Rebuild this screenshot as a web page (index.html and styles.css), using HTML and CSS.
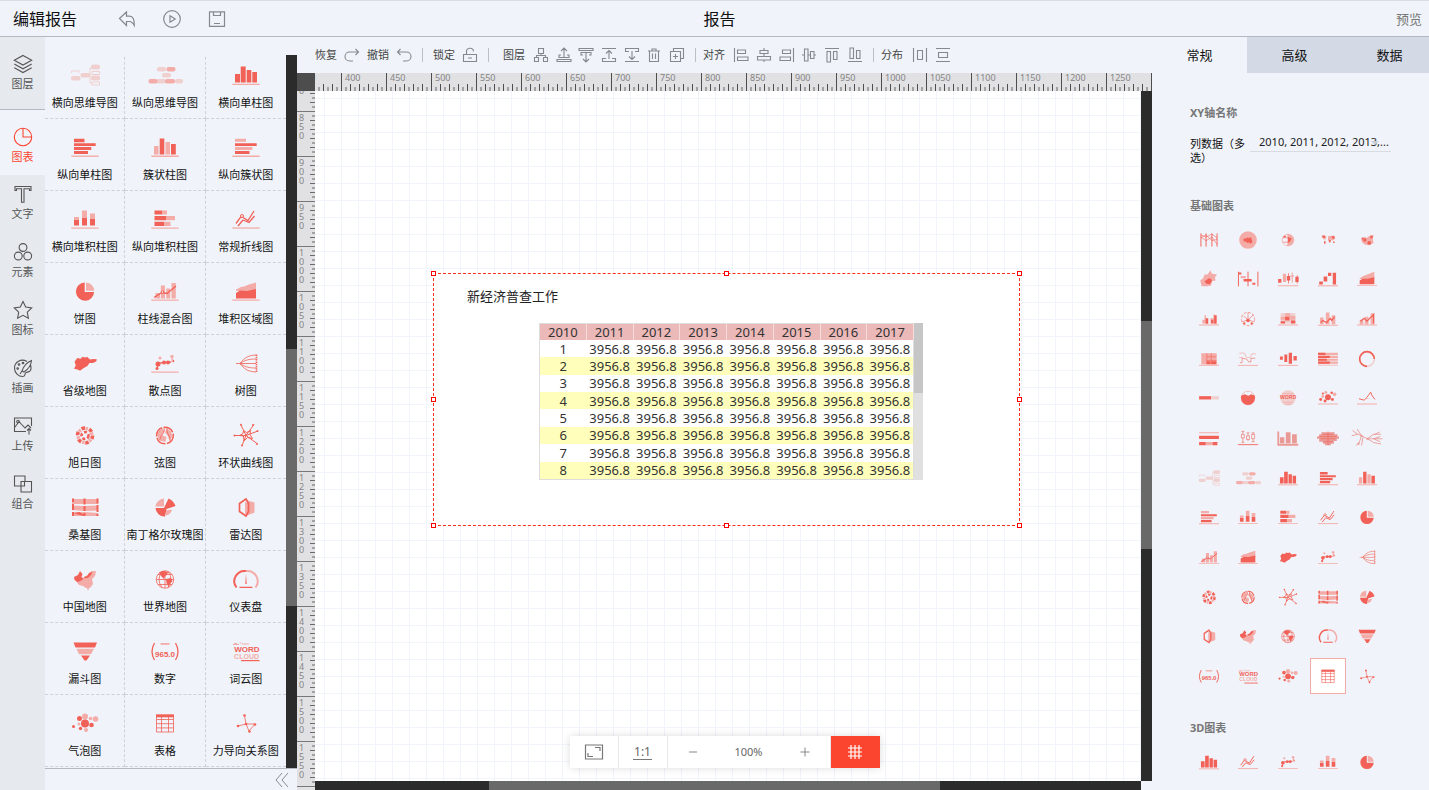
FILE: index.html
```html
<!DOCTYPE html>
<html lang="zh-CN">
<head>
<meta charset="utf-8">
<title>编辑报告</title>
<link rel="stylesheet" href="styles.css">
</head>
<body>
<svg class="sprite" aria-hidden="true">
  <symbol id="mind-h" viewBox="0 0 30 24"><g class="q"><rect x="21" y="1.500" width="9" height="5" rx="2"/><rect x="1" y="13" width="9.500" height="4.500" rx="2"/><rect x="10.500" y="10" width="10" height="4.500" rx="2"/><rect x="21" y="12.500" width="9" height="5" rx="2"/></g><path class="lq" d="M20.500 12H20V5h2M20 12v8h2M22 8.500h7.500v3H22zM22 19h7.500v3H22zM1.500 10V8H9v2"/></symbol>
  <symbol id="mind-v" viewBox="0 0 36 24"><g class="q"><rect x="10" y="4" width="9" height="4.500" rx="2"/><rect x="15" y="10" width="9" height="4.500" rx="2"/><rect x="9" y="16" width="10" height="4.500" rx="2"/><rect x="28" y="16" width="8" height="4.500" rx="2"/></g><g class="p"><rect x="19.500" y="4" width="9" height="4.500" rx="2"/><rect x="1.500" y="16" width="9" height="4.500" rx="2"/><rect x="18" y="16" width="10" height="4.500" rx="2"/></g></symbol>
  <symbol id="bar" viewBox="0 0 30 24"><path class="r" d="M4 11h5v8.500H4zM9.700 3.500h5v16h-5zM15.700 7h4.600v12.500h-4.600zM21.300 9H26v10.500h-4.700z"/><path class="p" d="M1.300 20.700h27.400V22H1.300z"/></symbol>
  <symbol id="hbar" viewBox="0 0 30 24"><path class="r" d="M4 3.800h10.500v3.400H4zM4 8.200h21.700v2.900H4zM4 12.100h17.300V15H4zM4 16h14v3H4z"/><path class="p" d="M1.300 20.500h27.400v1.400H1.300z"/></symbol>
  <symbol id="cluster" viewBox="0 0 30 24"><path class="r" d="M9.700 3.500h4.600v16H9.700zM21 9h4.800v10.500H21z"/><path class="p" d="M4 11h4.500v8.500H4zM15.500 7H20v12.500h-4.500zM1.300 20.500h27.400v1.400H1.300z"/></symbol>
  <symbol id="hcluster" viewBox="0 0 30 24"><path class="r" d="M4 8.200h21.700v2.900H4zM4 16h14.500v3H4z"/><path class="p" d="M4 3.800h11v3H4zM4 12.100h17.300V15H4zM1.300 20.500h27.400v1.400H1.300z"/></symbol>
  <symbol id="stack" viewBox="0 0 30 24"><path class="r" d="M4 13h5v5.600H4zM12 10.500h5v8.100h-5zM20 11.500h5v7.100h-5z"/><path class="p" d="M4 10h5v3H4zM12 3.500h5v7h-5zM20 6.500h5v5h-5zM1.300 20.400h27.400v1.300H1.300z"/></symbol>
  <symbol id="hstack" viewBox="0 0 30 24"><path class="r" d="M4.500 3.500h8v4h-8zM4.500 9h11.500v4.300H4.500zM4.500 14.800H14V19H4.500z"/><path class="p" d="M12.500 3.500H17v4h-4.500zM16 9h9v4.300h-9zM14 14.800h6.500V19H14zM1.300 20.400h27.400v1.300H1.300z"/></symbol>
  <symbol id="line" viewBox="0 0 30 24"><path class="lr" d="M5 16.500l5-7 2 1 5 3 6-9.500M7 19l5-6M12 13l6 2.500 5.500-6.500"/><circle class="ring" cx="11" cy="9" r="1.500"/><path class="p" d="M1.300 20.400h27.400v1.300H1.300z"/></symbol>
  <symbol id="pie" viewBox="0 0 30 24"><path class="r" d="M14.700 3.500v9.400h9.400a9.100 9.100 0 1 1-9.400-9.400z"/><path class="p" d="M16 3.500a8.500 8.500 0 0 1 8.200 8.200H16z"/></symbol>
  <symbol id="mix" viewBox="0 0 30 24"><path class="p" d="M5.500 14H10v5.500H5.500zM10.800 6.500H15v13h-4.200zM16.200 9.500h4v10h-4zM21.500 4h4.300v15.500h-4.300zM1.300 20.400h27.400v1.300H1.300z"/><path class="lr" d="M4 18.500l8-5 5 1 9-7.500"/><circle class="ring" cx="12.500" cy="13" r="1.200"/></symbol>
  <symbol id="area" viewBox="0 0 30 24"><path class="p" d="M5 10.500l5-2.500 3-.5 5-2 7-2V12H5zM1.300 20.400h27.400v1.300H1.300z"/><path class="r" d="M5 14l4-2.500 7 .5 9-2v9.500H5z"/></symbol>
  <symbol id="province" viewBox="0 0 30 24"><path class="r" d="M12.700 5.700l2 .8 2.600-.5L20 8.600l3.500-.6 3.300.2-.6 2.400-3.400 1.300-3.400.2-2 3-4 2.200-3.400 2.500-2.500-1.400L4 17.700l1.800-3.400-1.300-3.600 2.800-3.600 3.200.7z"/></symbol>
  <symbol id="scatter" viewBox="0 0 30 24"><g class="r"><circle cx="8" cy="13" r="2.500"/><circle cx="7" cy="17.500" r="1.500"/><circle cx="14" cy="11.500" r="2"/><circle cx="18" cy="11.500" r="2"/><circle cx="23" cy="10" r="1.300"/></g><path class="lr" d="M7 17l2-5 12-1"/><g class="p"><circle cx="10" cy="7" r="1.500"/><circle cx="22" cy="5.500" r="1.700"/><path d="M21.500 5h1.500v6h-1.500zM1.300 20.400h27.400v1.300H1.300z"/></g></symbol>
  <symbol id="tree" viewBox="0 0 30 24"><path class="lt" d="M5 12.500h4c4-5 7-8 16-8.500M9 12.500c4 5 7 8 16 8.500M9 12.500c5-3.500 9-4.500 16-4.500M9 12.500c5 3.500 9 4.500 16 4.500M9 12.500h16"/><path class="dots" d="M25.500 3.500v18"/></symbol>
  <symbol id="sunburst" viewBox="0 0 30 24"><circle class="dash-r" cx="15" cy="12.500" r="7.500"/><circle class="dash-p" cx="15" cy="12.500" r="7"/><circle class="dash-i" cx="15" cy="12.500" r="3.500"/></symbol>
  <symbol id="chord" viewBox="0 0 30 24"><circle class="chord-r" cx="15" cy="12.500" r="8.300"/><path class="p" d="M8 8l5-3 1.500 4-3 3 5 2-1 5-6-1.500-2-4zM17 5.500l4 3 1.500 5-3 4-2-5-2.500-3z"/><path class="lt" d="M14 4.500c2 5-4 8-4 12M17 5c-1 6 4 8 3 13"/></symbol>
  <symbol id="web" viewBox="0 0 30 24"><path class="lr3" d="M10 2l5 10.500M23 1.500l-8 11M3 12.500l12 0M27 8l-12 4.500M26 20.500l-11-8M11 22.500l4-10M12.500 7.500l3 2 4-2-.5 4 2.500 4-5-1-3.500 3.500-.5-5-4-.5 3.500-2z"/><g class="r"><circle cx="10" cy="1.800" r="1"/><circle cx="22" cy="2" r="1"/><circle cx="3.500" cy="12.500" r="1"/><circle cx="26.500" cy="8" r="1"/><circle cx="26" cy="21" r="1"/><circle cx="11" cy="22.500" r="1"/></g></symbol>
  <symbol id="sankey" viewBox="0 0 30 24"><path class="p" d="M2 4h26v5H2zM2 10.500l12 .5 14-.5v5l-13 .5-13-1zM2 17h12l14 1v3H2z"/><path class="r" d="M2 3.500h2v3.500H2zM2 9h2v6H2zM2 17h2v4H2zM13.500 3.500h2v6h-2zM13.500 11h2v5h-2zM13.500 18h2v3h-2zM26.500 3.500h2v5h-2zM26.500 10h2v7h-2zM26.500 19h2v2h-2zM4 18.500l5-1.500 7 3.500-2 .5z"/></symbol>
  <symbol id="rose" viewBox="0 0 30 24"><path class="p" d="M14 11.500H5.500A9 9 0 0 1 14 3.500zM16 15.500l6-1A8 8 0 0 1 16 20.500z"/><path class="r" d="M5.500 13H14L18.500 3.500a13 13 0 0 1 7 7.500L16.500 14l-1.500 7.500A9 9 0 0 1 5.500 13z"/></symbol>
  <symbol id="radar" viewBox="0 0 30 24"><path class="p" d="M15 5l8.500 2.500v10L15 21l3-4.500v-8z"/><path class="p" d="M14 7l5 2v8l-5 2z"/><path class="lr2" d="M15 4L8.500 8.500v8L15 21l2.500-4.500v-8z"/></symbol>
  <symbol id="china" viewBox="0 0 30 24"><path class="p" d="M10 12l6-3 4-2 2-3 4 0-1 5-3 3 1 5-3 4-4 0-3-2-4-1-3-4z"/><path class="r" d="M4 10l4-2 2-4 2.500 3-1 3 2 2-3 2-3 1-3-2zM14 10l3-1 2-3 3-1.500-.5 3-3 3-3 1z"/><circle class="r" cx="18" cy="22" r=".7"/></symbol>
  <symbol id="world" viewBox="0 0 30 24"><circle class="lt" cx="15" cy="12.500" r="8.700"/><path class="lt" d="M6.500 12.500h17M15 4v17M8 7.500h14M8 17.500h14M12 4.500q-6 8 0 16M18 4.500q6 8 0 16"/><path class="r" d="M9 5.500l4-1.500 5 1-1 3-2 1-1 3-3-3zM16 12l5-1 1.500 3-3 3-1 3-2-4z"/></symbol>
  <symbol id="gauge" viewBox="0 0 30 24"><path class="g-r" d="M5.500 20.500A10.300 10.300 0 0 1 15 4"/><path class="g-p" d="M15 4a10.300 10.300 0 0 1 9.500 16.500"/><path class="r" d="M14.300 17l.7-10.500.7 10.500zM8.500 19.800h13v1.300h-13z"/></symbol>
  <symbol id="funnel" viewBox="0 0 30 24"><path class="r" d="M3.500 3.500H27l-2 5H5.500zM11 16.500h9l-3.500 5h-2z"/><path class="p" d="M6.500 9.700H24L21 15.300H9z"/></symbol>
  <symbol id="bubble" viewBox="0 0 30 24"><g class="p"><circle cx="15" cy="5.500" r="3"/><circle cx="25.500" cy="8" r="2.800"/><circle cx="20.500" cy="7.500" r="1.800"/><circle cx="9" cy="13" r="1.500"/><circle cx="16" cy="19" r="2"/></g><g class="r"><circle cx="9.500" cy="7.500" r="2.500"/><circle cx="15" cy="12.500" r="4"/><circle cx="21.500" cy="14" r="2.300"/><circle cx="3.500" cy="15.500" r="1.500"/><circle cx="10.500" cy="17.500" r="1.700"/></g></symbol>
  <symbol id="table" viewBox="0 0 30 24"><path class="lt" d="M6.500 4h17v17h-17zM6.500 8.500h17M6.500 12.700h17M6.500 16.900h17M11.500 6v15M18.500 6v15"/><path class="r" d="M6 3.500h18v2.800H6z"/></symbol>
  <symbol id="force" viewBox="0 0 30 24"><path class="lt" d="M13.500 4.500l1.500 8.500 3 7 6-7-9 0-8 2"/><g class="r"><circle cx="13.500" cy="4.500" r="1.300"/><circle cx="15" cy="13" r="1.300"/><circle cx="18.500" cy="20.500" r="1.300"/><circle cx="24" cy="13.500" r="1.300"/><circle cx="7" cy="15" r="1.300"/></g></symbol>

  <symbol id="parallel" viewBox="0 0 30 24"><path class="lr" d="M4 3v18M11 3v18M19 3v18M26 3v18"/><path class="lt" d="M4 5l7 3 8-4 7 5M4 9l7-4 8 8 7-2M4 8l7 5 8-5 7 10"/></symbol>
  <symbol id="contour" viewBox="0 0 30 24"><circle class="p" cx="15" cy="12" r="12"/><path class="r" d="M9 10l4 0 2-2 1 2 3-2 1 3 1 4-3 2-2-2-2 1-2-2-3 0z"/></symbol>
  <symbol id="globe" viewBox="0 0 30 24"><circle class="lp" cx="15" cy="12" r="8"/><path class="lt" d="M15 4v16M8 9h14M8 15h14"/><path class="p" d="M15 4a8 8 0 0 1 0 16z"/><path class="r" d="M15 8l5 2-2 4-3 2zM8 8l3-2 2 1-3 2z"/></symbol>
  <symbol id="worldmap" viewBox="0 0 30 24"><path class="p" d="M6 7l5-1 2 2-2 4-3-2zM15 7l8-1 2 4-4 3-3-2-3 1z"/><path class="r" d="M7 6h4v3H8zM10 13l2 1-1 4-1.500-2zM16 11l3 1-1 4-2-2zM20 7h4v3h-3zM22 14h2v2h-2z"/></symbol>
  <symbol id="mappoint" viewBox="0 0 30 24"><path class="p" d="M7 10l4-2 4 1 4-3 5-1-1 6 1 5-6 3-6-1-4-3z"/><g class="r"><circle cx="12" cy="12" r="2.300"/><circle cx="18" cy="16" r="2.500"/><circle cx="21" cy="8" r="1.800"/><circle cx="9" cy="10" r="1.300"/></g></symbol>
  <symbol id="district" viewBox="0 0 30 24"><path class="p" d="M3 14l4-3 2-5 4 0 4-6 2 5 7 1-3 4 1 4-5 1-1 6-5 1-8 0z"/><path class="r" d="M9 15l3-2 3-2 3 1 1 3-3 4-5-1z"/></symbol>
  <symbol id="gantt" viewBox="0 0 30 24"><path class="lr" d="M2 2v20M15 2v20M28.500 2v20"/><path class="p" d="M5 8h7v3H5z"/><path class="r" d="M2 3h4v3H2zM9 12h11v3.500H9zM21 17h4v3h-4z"/></symbol>
  <symbol id="candle" viewBox="0 0 30 24"><path class="p" d="M8 5h4.500v11H8zM1 20.500h28V22H1zM20 3h1.500v14H20zM18.500 7h4.500v2h-4.500z"/><path class="r" d="M1.500 12h4.500v5H1.500zM13.500 8H18v6h-4.500zM25 9h4.500v7H25zM15.300 4h1v14h-1zM27 7h1v11h-1z"/></symbol>
  <symbol id="waterfall" viewBox="0 0 30 24"><path class="r" d="M3 15.500h5v4H3zM9 8.500h5v7H9zM15 3.500h4.500V8H15zM21.500 3.500H26v16h-4.500z"/><path class="p" d="M1.300 20.500h27.400V22H1.300z"/></symbol>
  <symbol id="area2" viewBox="0 0 30 24"><path class="p" d="M5 11l5-3 8-3 7-3v10H5zM1.300 20.400h27.400v1.300H1.300z"/><path class="r" d="M5 14l4-2.500 7 0 9-2v9.500H5z"/></symbol>
  <symbol id="twin" viewBox="0 0 30 24"><path class="p" d="M6 13h4v5H6zM9 7h2v11H9zM17 11h4v7h-4zM21 6h2v12h-2zM1.300 19.500h27.400v1.300H1.300z"/><path class="r" d="M10.500 11H14v7.500h-3.500zM22 7h3.500v11.500H22zM18 13h3v5h-3z"/></symbol>
  <symbol id="radial" viewBox="0 0 30 24"><circle class="dash-t" cx="15" cy="12" r="9"/><path class="lt" d="M15 13L9 8M15 13V3M15 13l7-6M15 13l8 3M15 13l-8 3"/><g class="r"><circle cx="15" cy="14" r="2.500"/><circle cx="10" cy="18" r="1.500"/><circle cx="20" cy="18" r="1.500"/></g></symbol>
  <symbol id="heat" viewBox="0 0 30 24"><path class="q" d="M5 4h20v14H5z"/><path class="p" d="M11 4h7v5h-7zM5 9h6v4H5zM18 8h7v5h-7z"/><path class="r" d="M11 9h6v5h-6zM5 15h6v3H5zM19 14h6v4h-6z"/><path class="p" d="M1.300 19.500h27.400v1.300H1.300z"/></symbol>
  <symbol id="mix2" viewBox="0 0 30 24"><path class="p" d="M4 10h5v9H4zM12 3h5v16h-5zM20 7h5v12h-5zM1.300 20h27.400v1.300H1.300z"/><path class="lr2" d="M5 17l3-3 5 3 5-6 2 3 4-5"/></symbol>
  <symbol id="mix3" viewBox="0 0 30 24"><path class="p" d="M5 13h5v6H5zM12 9h5v10h-5zM20 4h5v15h-5zM1.300 19.500h27.400v1.300H1.300z"/><path class="lr2" d="M6 15l5-4 4 4 9-9v12"/></symbol>
  <symbol id="treemap" viewBox="0 0 30 24"><path class="p" d="M4.500 4h21v15h-21zM1.300 20h27.400v1.300H1.300z"/><path class="r" d="M12 15h5v4h-5zM18 15h7v4h-7z"/><path class="lt" d="M12 4v15M18 4v15M12 9h13M12 14h13"/></symbol>
  <symbol id="step" viewBox="0 0 30 24"><path class="lp" d="M3 4h7l3 6h5l2-5h6M3 10h5"/><path class="lt" d="M4 17h3v-6l6 1 3 4h3v-5h6"/><path class="p" d="M1.300 20h27.400v1.300H1.300z"/></symbol>
  <symbol id="center" viewBox="0 0 30 24"><path class="r" d="M4 8.500h4v4.500H4zM10 6h4v10h-4zM16 3.500h4.500v15H16zM22.500 8H27v6h-4.500z"/><path class="p" d="M1.300 20h27.400v1.300H1.300z"/></symbol>
  <symbol id="percent" viewBox="0 0 30 24"><path class="p" d="M1.500 3.500h27v3h-27zM1.500 7.500h27v3h-27zM1.500 11.500h27v3h-27zM1.500 15.500h27v3h-27zM1.500 20h27v1h-27z"/><path class="r" d="M1.500 3.500h10v3h-10zM1.500 7.500h16v3h-16zM1.500 11.500h12v3h-12zM1.500 15.500h16v3h-16z"/></symbol>
  <symbol id="donut" viewBox="0 0 30 24"><circle class="donut-q" cx="15" cy="12" r="10"/><path class="donut-r" d="M15 22A10 10 0 1 1 25 12"/></symbol>
  <symbol id="progress" viewBox="0 0 30 24"><path class="r" d="M1.500 9.500H18v4.500H1.500z"/><path class="q" d="M18 9.500h10.500V14H18z"/></symbol>
  <symbol id="liquid" viewBox="0 0 30 24"><circle class="lp" cx="15" cy="12" r="9.300"/><path class="r" d="M5.500 9l5-2 5 2 4-2 5 2v3a9.500 9.500 0 0 1-19 0z"/></symbol>
  <symbol id="bubble2" viewBox="0 0 30 24"><g class="p"><circle cx="12" cy="4.500" r="2"/><circle cx="24" cy="7" r="2.500"/><circle cx="8" cy="10" r="2"/><path d="M1.300 19.500h27.400v1.300H1.300z"/></g><g class="r"><circle cx="15" cy="11" r="4"/><circle cx="20" cy="5" r="1.700"/><circle cx="8" cy="6" r="1.500"/><circle cx="5" cy="14" r="2"/><circle cx="11" cy="16" r="2"/><circle cx="21" cy="14" r="2"/></g></symbol>
  <symbol id="peak" viewBox="0 0 30 24"><path class="lr" d="M4 13l7 2 4-4 5-7 2 5 4 5"/><path class="p" d="M1.300 19.500h27.400v1.300H1.300zM11 14l4-2 5 0z"/></symbol>
  <symbol id="bands" viewBox="0 0 30 24"><path class="p" d="M1.500 4h27v1.500h-27zM10.500 17.500H20V22h-9.500z"/><path class="r" d="M1.500 9h27v4.500h-27zM1.500 17.500h9V22h-9zM20 17.500h6.500V22H20z"/></symbol>
  <symbol id="boxplot" viewBox="0 0 30 24"><path class="lt" d="M6 3h4M8 3v4M6 7h4v5H6zM8 12v6M6 18h4M13 5h4M15 5v4M13 9h4v5h-4zM15 14v2M20 5h4M22 5v2M20 7h4v6h-4zM22 13v4M20 17h4"/><path class="r" d="M1.300 20.500h27.400v1.200H1.300z"/></symbol>
  <symbol id="histo" viewBox="0 0 30 24"><path class="m" d="M.500 3H3v17h26v2.500H.500zM4 11h6v8H4zM12 4h6.500v15H12zM20.500 7H27v12h-6.500z"/></symbol>
  <symbol id="brain" viewBox="0 0 30 24"><path class="m" d="M6 4h18v3h4v3h2v3h-3v3h-4v4h-4v2h-8v-2H8v-3H3v-4H0v-3h3V7h3z"/><path class="lt" d="M15 3v19M3 10h24M5 13h20M8 7h14M9 17h12"/></symbol>
  <symbol id="branch" viewBox="0 0 44 24"><path class="lb" d="M2 2l7 5 5 2 8 4 8-6 10 0M22 13l20 0M22 13l8 5 10 2M14 9L8 0M9 7L1 9M14 9l-4 12M16 11l-2 11M30 8l8-4M30 13l9-3M30 13l9 4M10 18l-3 4"/><g class="m"><circle cx="14" cy="9" r="1.500"/><circle cx="22" cy="13" r="1.500"/><circle cx="10" cy="20" r="1.200"/></g></symbol>
</svg>

<div class="app">
  <header class="header">
    <div class="header-left">
      <h1 class="header-name">编辑报告</h1>
      <button class="head-btn" aria-label="返回"><svg viewBox="0 0 18 18"><path d="M1.500 8.500L8.500 2v4.200h3c3.500 0 5 3 4.800 9.300-1.500-2.800-3-4-5-4H8.500v4z"/></svg></button>
      <button class="head-btn" aria-label="播放"><svg viewBox="0 0 18 18"><circle cx="9" cy="9" r="8.300"/><path d="M7 5.800l5.200 3.200L7 12.200z"/></svg></button>
      <button class="head-btn" aria-label="保存"><svg viewBox="0 0 18 18"><path d="M1.500 1.800h15v14.500h-15zM5.500 2v3.500h7V2M6 13.500h6"/></svg></button>
    </div>
    <div class="header-title">报告</div>
    <a class="preview" href="#preview">预览</a>
  </header>

  <div class="body">
    <nav class="rail">
      <button class="rail-item rail-first"><svg viewBox="0 0 20 20"><path d="M10 1.500l8.700 4.800L10 11 1.300 6.300zM1.300 10l8.700 4.800L18.700 10M1.300 13.700l8.700 4.800 8.700-4.800"/></svg>图层</button>
      <button class="rail-item rail-active"><svg viewBox="0 0 20 20"><circle cx="10" cy="10" r="8.700"/><path d="M10 1.300V10h8.700"/></svg>图表</button>
      <button class="rail-item"><svg viewBox="0 0 20 20"><path d="M2 2.500h16v4h-1.500V4.700H11v13.500H8.500V4.700H3.500v1.800H2z"/></svg>文字</button>
      <button class="rail-item"><svg viewBox="0 0 20 20"><circle cx="10" cy="5.500" r="3.900"/><circle cx="5.300" cy="14" r="3.900"/><circle cx="14.700" cy="14" r="3.900"/></svg>元素</button>
      <button class="rail-item"><svg viewBox="0 0 20 20"><path d="M10 1.500l2.700 5.600 6 .8-4.400 4.200 1.100 6.100L10 15.300l-5.400 2.900 1.100-6.100L1.300 7.900l6-.8z"/></svg>图标</button>
      <button class="rail-item"><svg viewBox="0 0 20 20"><path d="M14 3.500C8 0 1.500 4 1.500 10c0 5 4 8.500 8 8.500 3 0 2-2 3-3.500s5 0 5.500-4c.2-1.500 0-2.500-.5-4M18.500 2.500c-5 2-8 6-9.500 10.500l2 1c4-2.500 7-6.500 7.500-11.500zM9 13l-2 3"/><circle cx="6" cy="6.500" r=".8"/><circle cx="4.700" cy="10.500" r=".8"/><circle cx="10" cy="5" r=".8"/></svg>插画</button>
      <button class="rail-item"><svg viewBox="0 0 20 20"><path d="M13 15.500H1.500V2h17v8M2 11l4-5.500 6 6.500 3-3 3 3M16 18.500v-6M14 14.500l2-2 2 2"/><circle cx="5" cy="5.500" r="1.300"/></svg>上传</button>
      <button class="rail-item"><svg viewBox="0 0 20 20"><path d="M7.500 12H1.500V2H12v5M8 7.500h10.500V18H8zM7.500 12h4V7.500"/></svg>组合</button>
    </nav>

    <aside class="library">
      <div class="library-scroll">
        <div class="library-grid">
          <button class="chart"><svg><use href="#mind-h"/></svg>横向思维导图</button>
          <button class="chart"><svg class="wide"><use href="#mind-v"/></svg>纵向思维导图</button>
          <button class="chart"><svg><use href="#bar"/></svg>横向单柱图</button>
          <button class="chart"><svg><use href="#hbar"/></svg>纵向单柱图</button>
          <button class="chart"><svg><use href="#cluster"/></svg>簇状柱图</button>
          <button class="chart"><svg><use href="#hcluster"/></svg>纵向簇状图</button>
          <button class="chart"><svg><use href="#stack"/></svg>横向堆积柱图</button>
          <button class="chart"><svg><use href="#hstack"/></svg>纵向堆积柱图</button>
          <button class="chart"><svg><use href="#line"/></svg>常规折线图</button>
          <button class="chart"><svg><use href="#pie"/></svg>饼图</button>
          <button class="chart"><svg><use href="#mix"/></svg>柱线混合图</button>
          <button class="chart"><svg><use href="#area"/></svg>堆积区域图</button>
          <button class="chart"><svg><use href="#province"/></svg>省级地图</button>
          <button class="chart"><svg><use href="#scatter"/></svg>散点图</button>
          <button class="chart"><svg><use href="#tree"/></svg>树图</button>
          <button class="chart"><svg><use href="#sunburst"/></svg>旭日图</button>
          <button class="chart"><svg><use href="#chord"/></svg>弦图</button>
          <button class="chart"><svg><use href="#web"/></svg>环状曲线图</button>
          <button class="chart"><svg><use href="#sankey"/></svg>桑基图</button>
          <button class="chart"><svg><use href="#rose"/></svg>南丁格尔玫瑰图</button>
          <button class="chart"><svg><use href="#radar"/></svg>雷达图</button>
          <button class="chart"><svg><use href="#china"/></svg>中国地图</button>
          <button class="chart"><svg><use href="#world"/></svg>世界地图</button>
          <button class="chart"><svg><use href="#gauge"/></svg>仪表盘</button>
          <button class="chart"><svg><use href="#funnel"/></svg>漏斗图</button>
          <button class="chart"><svg viewBox="0 0 30 24"><path class="lr" d="M4.500 4q-5 8.500 0 17M25.500 4q5 8.500 0 17"/><path class="p" d="M10.500 4h9v1.800h-9z"/><text class="t-num" x="15" y="17.500">965.0</text></svg>数字</button>
          <button class="chart"><svg viewBox="0 0 30 24"><path class="p" d="M2 5h1v-1h3v1h2v1H2zM11 4.500h7v1h-7zM8.500 3.500h2v1h-2z"/><text class="t-w1" x="28.500" y="12.500">WORD</text><text class="t-w2" x="28" y="19.500">CLOUD</text><path class="r" d="M10 21h18.500v1.200H10z"/></svg>词云图</button>
          <button class="chart"><svg><use href="#bubble"/></svg>气泡图</button>
          <button class="chart"><svg><use href="#table"/></svg>表格</button>
          <button class="chart"><svg><use href="#force"/></svg>力导向关系图</button>
        </div>
        <div class="track library-track"><div class="thumb"></div></div>
      </div>
      <div class="library-foot"><button class="collapse" aria-label="收起"><svg viewBox="0 0 14 16"><path d="M7 1L1 8l6 7M13 1L7 8l6 7"/></svg></button></div>
    </aside>

    <main class="workspace">
      <div class="toolbar">
        <span class="tool-label">恢复</span><button class="tool" aria-label="恢复"><svg viewBox="0 0 16 16"><path d="M14.500 5H5.500a4.500 4.500 0 0 0 0 9H9M11.500 2l3 3-3 3"/></svg></button>
        <span class="tool-label">撤销</span><button class="tool" aria-label="撤销"><svg viewBox="0 0 16 16"><path d="M1.500 5h9a4.500 4.500 0 0 1 0 9H7M4.500 2l-3 3 3 3"/></svg></button>
        <span class="sep sep-near"></span>
        <span class="tool-label">锁定</span><button class="tool" aria-label="锁定"><svg viewBox="0 0 16 16"><path d="M1.500 7.500h13v7h-13zM4.500 7.500V5a3.500 3.500 0 0 1 7-.5M6 11h4"/></svg></button>
        <span class="sep sep-near sep-wide"></span>
        <span class="tool-label">图层</span>
        <div class="tool-set tool-set-7">
          <button class="tool" aria-label="层级"><svg viewBox="0 0 16 16"><path d="M5.500 1.500h5v5h-5zM1.500 10.500h4v4h-4zM10.500 10.500h4v4h-4zM8 6.500v2M3.500 10.500v-2h9v2"/></svg></button>
          <button class="tool" aria-label="上移一层"><svg viewBox="0 0 16 16"><path d="M8 10V1.500M5 4l3-3 3 3M5 8H3v2.500h10V8h-2M1 14.500h14v-2H1z"/></svg></button>
          <button class="tool" aria-label="下移一层"><svg viewBox="0 0 16 16"><path d="M1 1.500h14v2H1zM5 8H3V5.500h10V8h-2M8 6v8.500M5 12l3 3 3-3"/></svg></button>
          <button class="tool" aria-label="置顶"><svg viewBox="0 0 16 16"><path d="M1 1.500h14M8 12V3.500M5 6.500l3-3 3 3M5 11.500H1.500v3h13v-3H11"/></svg></button>
          <button class="tool" aria-label="置底"><svg viewBox="0 0 16 16"><path d="M1 14.500h14M8 4v8.500M5 9.500l3 3 3-3M5 4.500H1.500v-3h13v3H11"/></svg></button>
          <button class="tool" aria-label="删除"><svg viewBox="0 0 16 16"><path d="M2 4h12M3.500 4v10.500h9V4M6 4V2h4v2M6.500 6.500V12M9.500 6.500V12"/></svg></button>
          <button class="tool" aria-label="复制"><svg viewBox="0 0 16 16"><path d="M1.500 4.500h10v10h-10zM4.500 4V1.500h10v10H12M4 9.500h5M6.500 7v5"/></svg></button>
        </div>
        <span class="sep"></span>
        <span class="tool-label">对齐</span>
        <div class="tool-set tool-set-6">
          <button class="tool" aria-label="左对齐"><svg viewBox="0 0 16 16"><path d="M1.500 1v14M4.500 3h8v3.500h-8zM4.500 10H15v3.500H4.500z"/></svg></button>
          <button class="tool" aria-label="水平居中"><svg viewBox="0 0 16 16"><path d="M8 1v2.500M8 6.500v3M8 13v2M4 3.500h8v3H4zM1.500 9.500h13v3.500h-13z"/></svg></button>
          <button class="tool" aria-label="右对齐"><svg viewBox="0 0 16 16"><path d="M14.500 1v14M3.500 3h8v3.500h-8zM1 10h10.500v3.500H1z"/></svg></button>
          <button class="tool" aria-label="垂直居中"><svg viewBox="0 0 16 16"><path d="M1 8h2.500M7 8h2.500M13 8h2M3.500 2H7v12H3.500zM9.500 4.500H13v7H9.500z"/></svg></button>
          <button class="tool" aria-label="顶对齐"><svg viewBox="0 0 16 16"><path d="M1 1.500h14M3 4.500h3.500V15H3zM9.500 4.500H13v8H9.500z"/></svg></button>
          <button class="tool" aria-label="底对齐"><svg viewBox="0 0 16 16"><path d="M1 14.500h14M3 1h3.500v10.500H3zM9.500 3.500H13v8H9.500z"/></svg></button>
        </div>
        <span class="sep"></span>
        <span class="tool-label">分布</span>
        <div class="tool-set tool-set-2">
          <button class="tool" aria-label="水平分布"><svg viewBox="0 0 16 16"><path d="M1.500 1v14M14.500 1v14M5.500 3.500h5v9h-5z"/></svg></button>
          <button class="tool" aria-label="垂直分布"><svg viewBox="0 0 16 16"><path d="M1 1.500h14M1 14.500h14M3.500 5.500h9v5h-9z"/></svg></button>
        </div>
      </div>

      <div class="stage">
        <div class="corner"></div>
        <div class="ruler-x"><div class="ruler-x-scale"><span>350</span><span>400</span><span>450</span><span>500</span><span>550</span><span>600</span><span>650</span><span>700</span><span>750</span><span>800</span><span>850</span><span>900</span><span>950</span><span>1000</span><span>1050</span><span>1100</span><span>1150</span><span>1200</span><span>1250</span><span></span></div></div>
        <div class="ruler-y"><div class="ruler-y-scale"><span>800</span><span>850</span><span>900</span><span>950</span><span>1000</span><span>1050</span><span>1100</span><span>1150</span><span>1200</span><span>1250</span><span>1300</span><span>1350</span><span>1400</span><span>1450</span><span>1500</span><span>1550</span><span></span></div></div>
        <div class="canvas">
          <section class="widget">
            <i class="handle nw"></i><i class="handle n"></i><i class="handle ne"></i><i class="handle w"></i><i class="handle e"></i><i class="handle sw"></i><i class="handle s"></i><i class="handle se"></i>
            <h2 class="widget-title">新经济普查工作</h2>
            <div class="widget-data">
              <table class="data">
                <thead><tr><th>2010</th><th>2011</th><th>2012</th><th>2013</th><th>2014</th><th>2015</th><th>2016</th><th>2017</th></tr></thead>
                <tbody>
                  <tr><td>1</td><td>3956.8</td><td>3956.8</td><td>3956.8</td><td>3956.8</td><td>3956.8</td><td>3956.8</td><td>3956.8</td></tr>
                  <tr><td>2</td><td>3956.8</td><td>3956.8</td><td>3956.8</td><td>3956.8</td><td>3956.8</td><td>3956.8</td><td>3956.8</td></tr>
                  <tr><td>3</td><td>3956.8</td><td>3956.8</td><td>3956.8</td><td>3956.8</td><td>3956.8</td><td>3956.8</td><td>3956.8</td></tr>
                  <tr><td>4</td><td>3956.8</td><td>3956.8</td><td>3956.8</td><td>3956.8</td><td>3956.8</td><td>3956.8</td><td>3956.8</td></tr>
                  <tr><td>5</td><td>3956.8</td><td>3956.8</td><td>3956.8</td><td>3956.8</td><td>3956.8</td><td>3956.8</td><td>3956.8</td></tr>
                  <tr><td>6</td><td>3956.8</td><td>3956.8</td><td>3956.8</td><td>3956.8</td><td>3956.8</td><td>3956.8</td><td>3956.8</td></tr>
                  <tr><td>7</td><td>3956.8</td><td>3956.8</td><td>3956.8</td><td>3956.8</td><td>3956.8</td><td>3956.8</td><td>3956.8</td></tr>
                  <tr><td>8</td><td>3956.8</td><td>3956.8</td><td>3956.8</td><td>3956.8</td><td>3956.8</td><td>3956.8</td><td>3956.8</td></tr>
                </tbody>
              </table>
              <div class="data-track"><div class="data-thumb"></div></div>
            </div>
          </section>
        </div>
        <div class="track canvas-track-y"><div class="thumb"></div></div>
        <div class="track canvas-track-x"><div class="thumb"></div></div>
      </div>

      <div class="zoombar">
        <button class="zoom-btn" aria-label="适应窗口"><svg viewBox="0 0 20 16"><path d="M1.500 1h17v14h-17zM11 3.500h5v3.500M9 12.500H4V9"/></svg></button>
        <button class="zoom-btn"><span class="ratio">1:1</span></button>
        <div class="zoom-level">
          <button class="zoom-step" aria-label="缩小"><svg viewBox="0 0 10 10"><path d="M1 5h8"/></svg></button>
          <output>100%</output>
          <button class="zoom-step" aria-label="放大"><svg viewBox="0 0 10 10"><path d="M.500 5h9M5 .500v9"/></svg></button>
        </div>
        <button class="zoom-btn zoom-grid" aria-label="网格"><svg viewBox="0 0 16 16"><path d="M4 1v14M8 1v14M12 1v14M1 4h14M1 8h14M1 12h14"/></svg></button>
      </div>
    </main>

    <aside class="props">
      <div class="tabs">
        <button class="tab tab-on">常规</button><button class="tab">高级</button><button class="tab">数据</button>
      </div>
      <div class="props-body">
        <h3 class="props-head">XY轴名称</h3>
        <div class="field">
          <label class="field-label" for="cols">列数据（多选）</label>
          <div class="picker"><select id="cols"><option>2010, 2011, 2012, 2013,...</option></select><svg class="caret" viewBox="0 0 8 4"><path d="M0 0h8L4 4z"/></svg></div>
        </div>
        <h3 class="props-head props-head-charts">基础图表</h3>
        <div class="kinds kinds-base">
          <button aria-label="平行坐标"><svg><use href="#parallel"/></svg></button>
          <button aria-label="等值图"><svg><use href="#contour"/></svg></button>
          <button aria-label="地球"><svg><use href="#globe"/></svg></button>
          <button aria-label="世界图"><svg><use href="#worldmap"/></svg></button>
          <button aria-label="地图散点"><svg><use href="#mappoint"/></svg></button>
          <button aria-label="区域地图"><svg><use href="#district"/></svg></button>
          <button aria-label="甘特图"><svg><use href="#gantt"/></svg></button>
          <button aria-label="K线图"><svg><use href="#candle"/></svg></button>
          <button aria-label="瀑布图"><svg><use href="#waterfall"/></svg></button>
          <button aria-label="面积图"><svg><use href="#area2"/></svg></button>
          <button aria-label="对比柱图"><svg><use href="#twin"/></svg></button>
          <button aria-label="径向图"><svg><use href="#radial"/></svg></button>
          <button aria-label="热力图"><svg><use href="#heat"/></svg></button>
          <button aria-label="柱线图"><svg><use href="#mix2"/></svg></button>
          <button aria-label="趋势图"><svg><use href="#mix3"/></svg></button>
          <button aria-label="矩形树图"><svg><use href="#treemap"/></svg></button>
          <button aria-label="阶梯图"><svg><use href="#step"/></svg></button>
          <button aria-label="对称柱图"><svg><use href="#center"/></svg></button>
          <button aria-label="百分比图"><svg><use href="#percent"/></svg></button>
          <button aria-label="环图"><svg><use href="#donut"/></svg></button>
          <button aria-label="进度条"><svg><use href="#progress"/></svg></button>
          <button aria-label="水球图"><svg><use href="#liquid"/></svg></button>
          <button aria-label="词球"><svg viewBox="0 0 30 24"><circle class="q" cx="15" cy="12" r="10.500"/><path class="lp" d="M7 6h16M8 18h14M12 20.500h8"/><text class="t-ball" x="15" y="14">WORD</text></svg></button>
          <button aria-label="气泡散点"><svg><use href="#bubble2"/></svg></button>
          <button aria-label="峰值图"><svg><use href="#peak"/></svg></button>
          <button aria-label="条带图"><svg><use href="#bands"/></svg></button>
          <button aria-label="箱线图"><svg><use href="#boxplot"/></svg></button>
          <button aria-label="直方图"><svg><use href="#histo"/></svg></button>
          <button aria-label="脑图"><svg><use href="#brain"/></svg></button>
          <button aria-label="分支图"><svg class="wide"><use href="#branch"/></svg></button>
          <button aria-label="横向思维导图"><svg><use href="#mind-h"/></svg></button>
          <button aria-label="纵向思维导图"><svg class="mid"><use href="#mind-v"/></svg></button>
          <button aria-label="横向单柱图"><svg><use href="#bar"/></svg></button>
          <button aria-label="纵向单柱图"><svg><use href="#hbar"/></svg></button>
          <button aria-label="簇状柱图"><svg><use href="#cluster"/></svg></button>
          <button aria-label="纵向簇状图"><svg><use href="#hcluster"/></svg></button>
          <button aria-label="横向堆积柱图"><svg><use href="#stack"/></svg></button>
          <button aria-label="纵向堆积柱图"><svg><use href="#hstack"/></svg></button>
          <button aria-label="常规折线图"><svg><use href="#line"/></svg></button>
          <button aria-label="饼图"><svg><use href="#pie"/></svg></button>
          <button aria-label="柱线混合图"><svg><use href="#mix"/></svg></button>
          <button aria-label="堆积区域图"><svg><use href="#area"/></svg></button>
          <button aria-label="省级地图"><svg><use href="#province"/></svg></button>
          <button aria-label="散点图"><svg><use href="#scatter"/></svg></button>
          <button aria-label="树图"><svg><use href="#tree"/></svg></button>
          <button aria-label="旭日图"><svg><use href="#sunburst"/></svg></button>
          <button aria-label="弦图"><svg><use href="#chord"/></svg></button>
          <button aria-label="环状曲线图"><svg><use href="#web"/></svg></button>
          <button aria-label="桑基图"><svg><use href="#sankey"/></svg></button>
          <button aria-label="南丁格尔玫瑰图"><svg><use href="#rose"/></svg></button>
          <button aria-label="雷达图"><svg><use href="#radar"/></svg></button>
          <button aria-label="中国地图"><svg><use href="#china"/></svg></button>
          <button aria-label="世界地图"><svg><use href="#world"/></svg></button>
          <button aria-label="仪表盘"><svg><use href="#gauge"/></svg></button>
          <button aria-label="漏斗图"><svg><use href="#funnel"/></svg></button>
          <button aria-label="数字"><svg viewBox="0 0 30 24"><path class="lr" d="M4.500 4q-5 8.500 0 17M25.500 4q5 8.500 0 17"/><path class="p" d="M10.500 4h9v1.800h-9z"/><text class="t-num" x="15" y="17.500">965.0</text></svg></button>
          <button aria-label="词云图"><svg viewBox="0 0 30 24"><path class="p" d="M2 5h1v-1h3v1h2v1H2zM11 4.500h7v1h-7zM8.500 3.500h2v1h-2z"/><text class="t-w1" x="28.500" y="12.500">WORD</text><text class="t-w2" x="28" y="19.500">CLOUD</text><path class="r" d="M10 21h18.500v1.200H10z"/></svg></button>
          <button aria-label="气泡图"><svg><use href="#bubble"/></svg></button>
          <button class="kind-on" aria-label="表格"><svg><use href="#table"/></svg></button>
          <button aria-label="力导向关系图"><svg><use href="#force"/></svg></button>
        </div>
        <h3 class="props-head props-head-3d">3D图表</h3>
        <div class="kinds">
          <button aria-label="3D柱图"><svg><use href="#bar"/></svg></button>
          <button aria-label="3D折线图"><svg><use href="#line"/></svg></button>
          <button aria-label="3D散点图"><svg><use href="#scatter"/></svg></button>
          <button aria-label="3D堆积图"><svg><use href="#stack"/></svg></button>
          <button aria-label="3D饼图"><svg><use href="#pie"/></svg></button>
        </div>
      </div>
    </aside>
  </div>
</div>
</body>
</html>
```
FILE: styles.css
```css
* { box-sizing: border-box; }

body {
  margin: 0;
  font-family: "Noto Sans", "Noto Sans CJK SC", sans-serif;
  font-size: 11px;
  line-height: 16px;
  color: #111;
  background: #f0f4fa;
}

button {
  margin: 0;
  padding: 0;
  border: 0;
  background: none;
  font: inherit;
  color: inherit;
  cursor: pointer;
}

h1, h2, h3 { margin: 0; font-weight: 400; }

svg { display: block; }
.sprite { position: absolute; width: 0; height: 0; }

/* chart glyph palette */
.r { fill: #f26157; }
.m { fill: #ea9a96; }
.p { fill: #f3aca8; }
.q { fill: #f0cfcf; }
.lr, .lr2, .lr3, .lt, .lp, .lq, .lb { fill: none; stroke: #f26157; stroke-width: 1.3; }
.lr2 { stroke-width: 1.7; }
.lr3 { stroke-width: 1; }
.lt { stroke-width: 0.8; }
.lp { stroke: #f3aca8; stroke-width: 1; }
.lb { stroke: #ea9a96; stroke-width: 1.2; }
.lq { stroke: #f0cfcf; stroke-width: 1; }
.ring { fill: #f0f4fa; stroke: #f26157; stroke-width: 1; }
.dots { fill: none; stroke: #f26157; stroke-width: 1.6; stroke-dasharray: 1.5 0.8; }
.dash-r { fill: none; stroke: #f26157; stroke-width: 3.6; stroke-dasharray: 3.5 4.4; }
.dash-p { fill: none; stroke: #f3aca8; stroke-width: 3.4; stroke-dasharray: 2.5 4.8; stroke-dashoffset: -4; }
.dash-i { fill: none; stroke: #f26157; stroke-width: 2.6; stroke-dasharray: 3 2; }
.dash-t { fill: none; stroke: #f3aca8; stroke-width: 1.5; stroke-dasharray: 4 2; }
.chord-r { fill: none; stroke: #f26157; stroke-width: 1.6; stroke-dasharray: 11 1.5; }
.g-r { fill: none; stroke: #f26157; stroke-width: 2; }
.g-p { fill: none; stroke: #f3aca8; stroke-width: 2; }
.donut-q { fill: none; stroke: #f0cfcf; stroke-width: 2.2; }
.donut-r { fill: none; stroke: #f26157; stroke-width: 2.2; }
.t-num, .t-w1, .t-w2, .t-ball { font-family: "Liberation Sans", sans-serif; font-weight: 700; line-height: 1; fill: #f26157; }
.t-num { font-size: 8px; text-anchor: middle; }
.t-w1 { font-size: 8px; text-anchor: end; }
.t-w2 { font-size: 7px; text-anchor: end; fill: #f3aca8; }
.t-ball { font-size: 7px; text-anchor: middle; }

.app { display: flex; flex-direction: column; height: 100vh; overflow: hidden; }

/* header */
.header {
  display: grid;
  grid-template-columns: 1fr auto 1fr;
  align-items: center;
  flex: none;
  height: 37px;
  padding: 0 7px 0 13px;
  border-top: 1px solid #d9dce1;
  border-bottom: 1px solid #b5b8bf;
}
.header-left { display: flex; align-items: center; }
.header-name { width: 96px; font-size: 16px; line-height: 20px; }
.head-btn { display: flex; justify-content: center; width: 36px; margin-right: 9px; }
.head-btn svg { width: 18px; height: 18px; fill: none; stroke: #85888d; stroke-width: 1.2; }
.header-title { padding-left: 4px; font-size: 16px; line-height: 20px; }
.preview { justify-self: end; font-size: 13px; color: #777; text-decoration: none; }

.body {
  display: grid;
  grid-template-columns: 45px 252px minmax(0, 1fr) 277px;
  flex: 1;
  min-height: 0;
}

/* left rail */
.rail { background: #e6e9ee; }
.rail-item {
  display: flex;
  flex-direction: column;
  align-items: center;
  gap: 2px;
  width: 100%;
  height: 58px;
  padding-top: 9px;
  color: #555;
}
.rail-item svg { width: 20px; height: 20px; fill: none; stroke: currentColor; stroke-width: 1.1; }
.rail-first { height: 73px; padding-top: 17px; border-bottom: 1px solid #b5b8bf; }
.rail-active { height: 65px; padding-top: 17px; background: #f0f4fa; color: #fb452f; }

/* chart library */
.library { display: flex; flex-direction: column; min-height: 0; padding-top: 18px; }
.library-scroll { display: flex; flex: 1; min-height: 0; overflow: hidden; }
.library-grid {
  display: grid;
  grid-template-columns: repeat(3, 1fr);
  grid-auto-rows: 72px;
  flex: 1;
  margin-top: -8px;
}
.chart {
  display: flex;
  flex-direction: column;
  align-items: center;
  gap: 8px;
  padding-top: 16px;
  border-right: 1px dashed #cdd1d8;
  border-bottom: 1px dashed #cdd1d8;
  white-space: nowrap;
}
.chart:nth-child(3n) { border-right: 0; }
.chart svg { width: 30px; height: 24px; }
.chart .wide { width: 36px; }
.track { background: #2b2b2b; }
.thumb { background: #696969; }
.library-track { width: 11px; padding-top: 294px; }
.library-track .thumb { height: 257px; }
.library-foot {
  display: flex;
  justify-content: flex-end;
  align-items: center;
  flex: none;
  height: 22px;
  padding-right: 8px;
  border-top: 1px solid #b5b8bf;
}
.collapse svg { width: 14px; height: 16px; fill: none; stroke: #888b91; stroke-width: 1; }

/* workspace */
.workspace { position: relative; display: flex; flex-direction: column; min-height: 0; }
.toolbar {
  display: flex;
  align-items: center;
  flex: none;
  height: 36px;
  padding-left: 18px;
  color: #444;
}
.tool-label { flex: none; width: 22px; }
.tool { display: flex; justify-content: center; flex: none; width: 30px; }
.tool svg { width: 16px; height: 16px; fill: none; stroke: #85888d; stroke-width: 1.1; }
.tool-set { display: flex; flex: none; margin-left: 5px; }
.tool-set .tool { flex: 1; width: auto; }
.tool-set-7 { width: 158px; }
.tool-set-6 { width: 136px; }
.tool-set-2 { width: 46px; }
.sep { display: flex; justify-content: center; flex: none; width: 15px; }
.sep::before { content: ""; width: 1px; height: 14px; background: #bbbec4; }
.sep-near { justify-content: flex-start; width: 14px; padding-left: 3px; }
.sep-wide { width: 18px; }

.stage {
  display: grid;
  grid-template: 18px minmax(0, 1fr) 9px / 18px minmax(0, 1fr) 11px;
  flex: 1;
  min-height: 0;
}
.corner { background: #4d4d4d; }
.ruler-x {
  grid-column: 2 / 4;
  overflow: hidden;
  background: #e1e1e4;
}
.ruler-x-scale { display: flex; margin-left: -19px; }
.ruler-x span {
  flex: none;
  width: 45px;
  height: 18px;
  padding-left: 3px;
  border-left: 1px solid #4d4d4d;
  font-size: 9px;
  line-height: 10px;
  color: #858585;
  background:
    repeating-linear-gradient(90deg, transparent 0 8px, #4d4d4d 8px 9px) 0 100% / 100% 7px no-repeat,
    repeating-linear-gradient(90deg, transparent 0 3px, #a2a2a4 3px 5px, transparent 5px 9px) 0 100% / 100% 4px no-repeat;
}
.ruler-y { grid-row: 2 / 4; overflow: hidden; background: #e1e1e4; }
.ruler-y-scale { margin-top: -25px; }
.ruler-y span {
  display: block;
  width: 18px;
  height: 45px;
  padding: 1px 11px 0 2px;
  border-top: 1px solid #777;
  font-size: 9px;
  line-height: 9px;
  text-align: center;
  word-break: break-all;
  color: #858585;
  background:
    repeating-linear-gradient(transparent 0 8px, #6a6a6a 8px 9px) 100% 0 / 5px 100% no-repeat,
    repeating-linear-gradient(transparent 0 3px, #a2a2a4 3px 5px, transparent 5px 9px) 100% 0 / 3px 100% no-repeat;
}
.canvas {
  position: relative;
  overflow: hidden;
  background:
    linear-gradient(#f1f4fa 1px, transparent 1px) 9px 7px / 17px 17px,
    linear-gradient(90deg, #f1f4fa 1px, transparent 1px) 9px 7px / 17px 17px,
    #fff;
}
.canvas-track-y { padding-top: 230px; }
.canvas-track-y .thumb { height: 228px; }
.canvas-track-x { grid-column: 2; padding-left: 174px; }
.canvas-track-x .thumb { width: 451px; height: 9px; }

/* selected widget on the canvas */
.widget {
  position: absolute;
  left: 118px;
  top: 182px;
  width: 587px;
  height: 253px;
  padding: 12px 33px;
  border: 1px dashed #fb2f1c;
  background: #fff;
}
.widget-title { font-size: 13px; line-height: 20px; color: #222; }
.widget-data { display: flex; width: 384px; margin: 17px 0 0 72px; }
.data {
  flex: none;
  width: 375px;
  height: 157px;
  border-collapse: collapse;
  table-layout: fixed;
  border: 1px solid #ddd;
  font-size: 13px;
  line-height: 16px;
  color: #333;
}
.data th, .data td { padding: 0; font-weight: 400; text-align: center; }
.data th { background: #ecb9b9; border-right: 1px solid #f6dcdc; vertical-align: top; }
.data tr:nth-child(even) td { background: #ffffbb; }
.data-track { width: 9px; background: #e0e0e0; }
.data-thumb { height: 70px; background: #c6c6c6; }
.handle { position: absolute; width: 5px; height: 5px; border: 1px solid #f00; background: #fff; }
.nw, .n, .ne { top: -3px; }
.sw, .s, .se { bottom: -3px; }
.nw, .w, .sw { left: -3px; }
.ne, .e, .se { right: -3px; }
.n, .s { left: calc(50% - 3px); }
.w, .e { top: calc(50% - 3px); }

/* zoom bar */
.zoombar {
  position: absolute;
  left: 50%;
  bottom: 22px;
  display: flex;
  height: 32px;
  background: #fff;
  box-shadow: 0 0 8px rgba(0, 0, 0, 0.14);
  color: #666;
  transform: translateX(-50%);
}
.zoom-btn { display: flex; align-items: center; justify-content: center; width: 49px; border-right: 1px solid #e8e8ec; }
.zoom-btn svg { width: 20px; height: 16px; fill: none; stroke: #777; stroke-width: 1.2; }
.ratio { padding: 0 1px; border-bottom: 1px solid #777; font-size: 12px; line-height: 14px; }
.zoom-level { display: flex; align-items: center; justify-content: space-between; width: 163px; padding: 0 20px; border-right: 1px solid #e8e8ec; }
.zoom-step svg { width: 10px; height: 10px; fill: none; stroke: #888; stroke-width: 1; }
.zoom-grid { border: 0; background: #fb452f; }
.zoom-grid svg { width: 16px; stroke: #fff; }

/* properties */
.props { overflow: hidden; min-height: 0; }
.tabs { display: flex; }
.tab { flex: none; width: 95px; height: 36px; background: #d3d9e5; font-size: 13px; }
.tab-on { background: #f0f4fa; }
.props-body { padding: 32px 38px 0; }
.props-head { font-size: 11px; font-weight: 700; color: #777; }
.field { display: flex; align-items: flex-start; margin-top: 16px; }
.field-label { width: 60px; padding-right: 4px; line-height: 14px; }
.picker { position: relative; flex: 1; margin-top: -2px; padding-bottom: 2px; border-bottom: 1px solid #d8dbe0; }
.picker select {
  display: block;
  width: 100%;
  padding: 0 0 0 9px;
  border: 0;
  background: none;
  appearance: none;
  font: inherit;
  line-height: 14px;
  color: #222;
}
.caret { position: absolute; right: 12px; top: 6px; width: 8px; height: 4px; fill: #c9ccd2; }
.props-head-charts { margin-top: 33px; }
.kinds {
  display: grid;
  grid-template-columns: repeat(5, 1fr);
  width: 198px;
  margin-left: -1px;
  place-items: center;
}
.kinds-base { height: 476px; margin-top: 6px; }
.kinds button { display: flex; align-items: center; justify-content: center; width: 36px; height: 36px; border: 1px solid transparent; }
.kinds svg { width: 22px; height: 18px; }
.kinds .mid { width: 26px; }
.kinds .wide { width: 33px; }
.kinds .kind-on { border-color: #f3aca8; background: #fff; }
.props-head-3d { margin-top: 24px; }
.props-head-3d + .kinds { margin-top: 8px; }
```
